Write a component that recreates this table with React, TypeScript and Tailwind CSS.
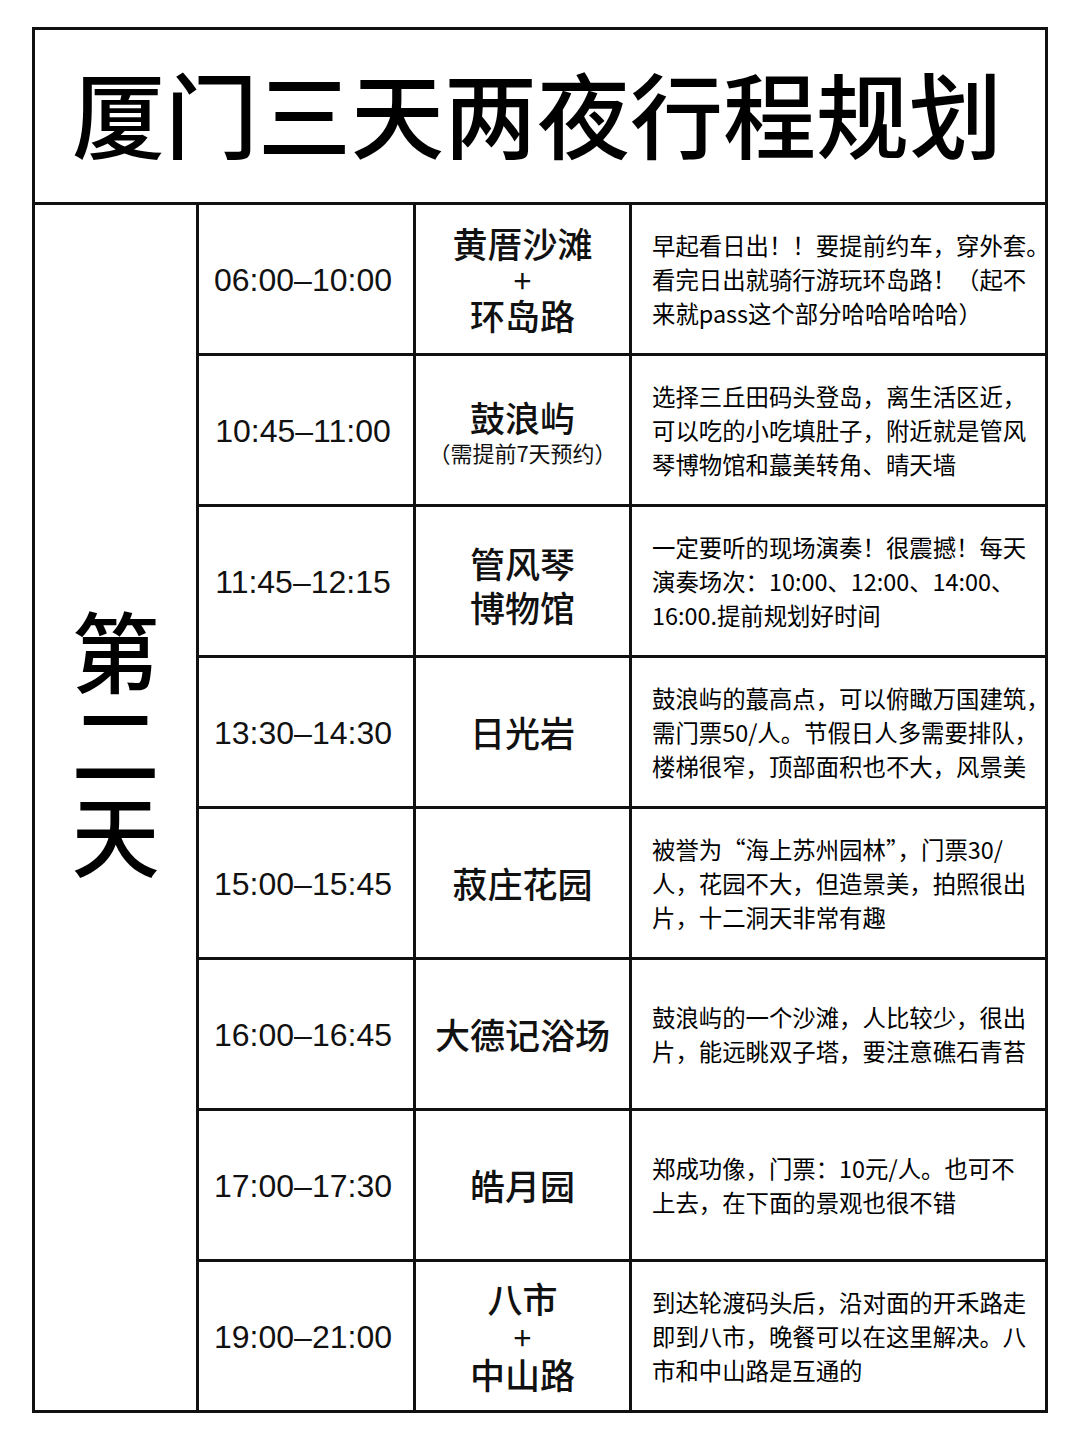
import React from "react";

type Row = {
  time: string;
  place: React.ReactNode;
  desc: string[];
};

const cjk = { fontFamily: '"Noto Sans CJK SC", "Noto Sans", sans-serif' };
const latin = { fontFamily: '"Liberation Sans", Arial, "Noto Sans CJK SC", sans-serif' };

const rows: Row[] = [
  {
    time: "06:00–10:00",
    place: (
      <div className="flex flex-col items-center leading-[36px]">
        <span>黄厝沙滩</span>
        <span className="text-[32px] font-normal leading-[36px]">+</span>
        <span>环岛路</span>
      </div>
    ),
    desc: [
      "早起看日出！！要提前约车，穿外套。",
      "看完日出就骑行游玩环岛路！（起不",
      "来就pass这个部分哈哈哈哈哈）",
    ],
  },
  {
    time: "10:45–11:00",
    place: (
      <div className="flex flex-col items-center pt-[4px]">
        <span className="leading-[40px]">鼓浪屿</span>
        <span className="text-[22px] font-normal leading-[30px]">（需提前7天预约）</span>
      </div>
    ),
    desc: [
      "选择三丘田码头登岛，离生活区近，",
      "可以吃的小吃填肚子，附近就是管风",
      "琴博物馆和蕞美转角、晴天墙",
    ],
  },
  {
    time: "11:45–12:15",
    place: (
      <div className="flex flex-col items-center leading-[44px] pt-[8px]">
        <span>管风琴</span>
        <span>博物馆</span>
      </div>
    ),
    desc: [
      "一定要听的现场演奏！很震撼！每天",
      "演奏场次：10:00、12:00、14:00、",
      "16:00.提前规划好时间",
    ],
  },
  {
    time: "13:30–14:30",
    place: <span>日光岩</span>,
    desc: [
      "鼓浪屿的蕞高点，可以俯瞰万国建筑，",
      "需门票50/人。节假日人多需要排队，",
      "楼梯很窄，顶部面积也不大，风景美",
    ],
  },
  {
    time: "15:00–15:45",
    place: <span>菽庄花园</span>,
    desc: [
      "被誉为“海上苏州园林”，门票30/",
      "人，花园不大，但造景美，拍照很出",
      "片，十二洞天非常有趣",
    ],
  },
  {
    time: "16:00–16:45",
    place: <span>大德记浴场</span>,
    desc: ["鼓浪屿的一个沙滩，人比较少，很出", "片，能远眺双子塔，要注意礁石青苔"],
  },
  {
    time: "17:00–17:30",
    place: <span>皓月园</span>,
    desc: ["郑成功像，门票：10元/人。也可不", "上去，在下面的景观也很不错"],
  },
  {
    time: "19:00–21:00",
    place: (
      <div className="flex flex-col items-center leading-[38px]">
        <span>八市</span>
        <span className="text-[32px] font-normal leading-[38px]">+</span>
        <span>中山路</span>
      </div>
    ),
    desc: [
      "到达轮渡码头后，沿对面的开禾路走",
      "即到八市，晚餐可以在这里解决。八",
      "市和中山路是互通的",
    ],
  },
];

export default function App() {
  return (
    <div className="w-[1080px] min-h-[1443px] bg-white pt-[27px] pl-[32px] text-black">
      <div className="w-[1016px] border-[3px] border-[#111] flex flex-col">
        <div
          className="h-[175px] border-b-[3px] border-[#111] flex items-center justify-center pb-[10px] pr-[6px] text-[93px] font-medium leading-none"
          style={cjk}
        >
          厦门三天两夜行程规划
        </div>
        <div className="flex">
          <div
            className="w-[164px] shrink-0 border-r-[3px] border-[#111] flex flex-col items-center justify-center pb-[136px] text-[88px] font-medium leading-[92px]"
            style={cjk}
          >
            <span>第</span>
            <span>二</span>
            <span>天</span>
          </div>
          <div className="flex-1 min-w-0 flex flex-col">
            {rows.map((r, i) => (
              <div
                key={i}
                className={
                  i < rows.length - 1
                    ? "flex h-[151px] border-b-[3px] border-[#111]"
                    : "flex h-[148px]"
                }
              >
                <div
                  className="w-[217px] shrink-0 border-r-[3px] border-[#111] flex items-center justify-center pr-[6px] pt-[2px] text-[32px] text-[#111]"
                  style={latin}
                >
                  {r.time}
                </div>
                <div
                  className="w-[216px] shrink-0 border-r-[3px] border-[#111] flex items-center justify-center text-[35px] font-medium text-[#111]"
                  style={cjk}
                >
                  {r.place}
                </div>
                <div
                  className="flex-1 min-w-0 overflow-visible flex flex-col justify-center pl-[20px] text-[23.4px] leading-[34px] text-black whitespace-nowrap"
                  style={cjk}
                >
                  {r.desc.map((l, j) => (
                    <span key={j}>{l}</span>
                  ))}
                </div>
              </div>
            ))}
          </div>
        </div>
      </div>
    </div>
  );
}
